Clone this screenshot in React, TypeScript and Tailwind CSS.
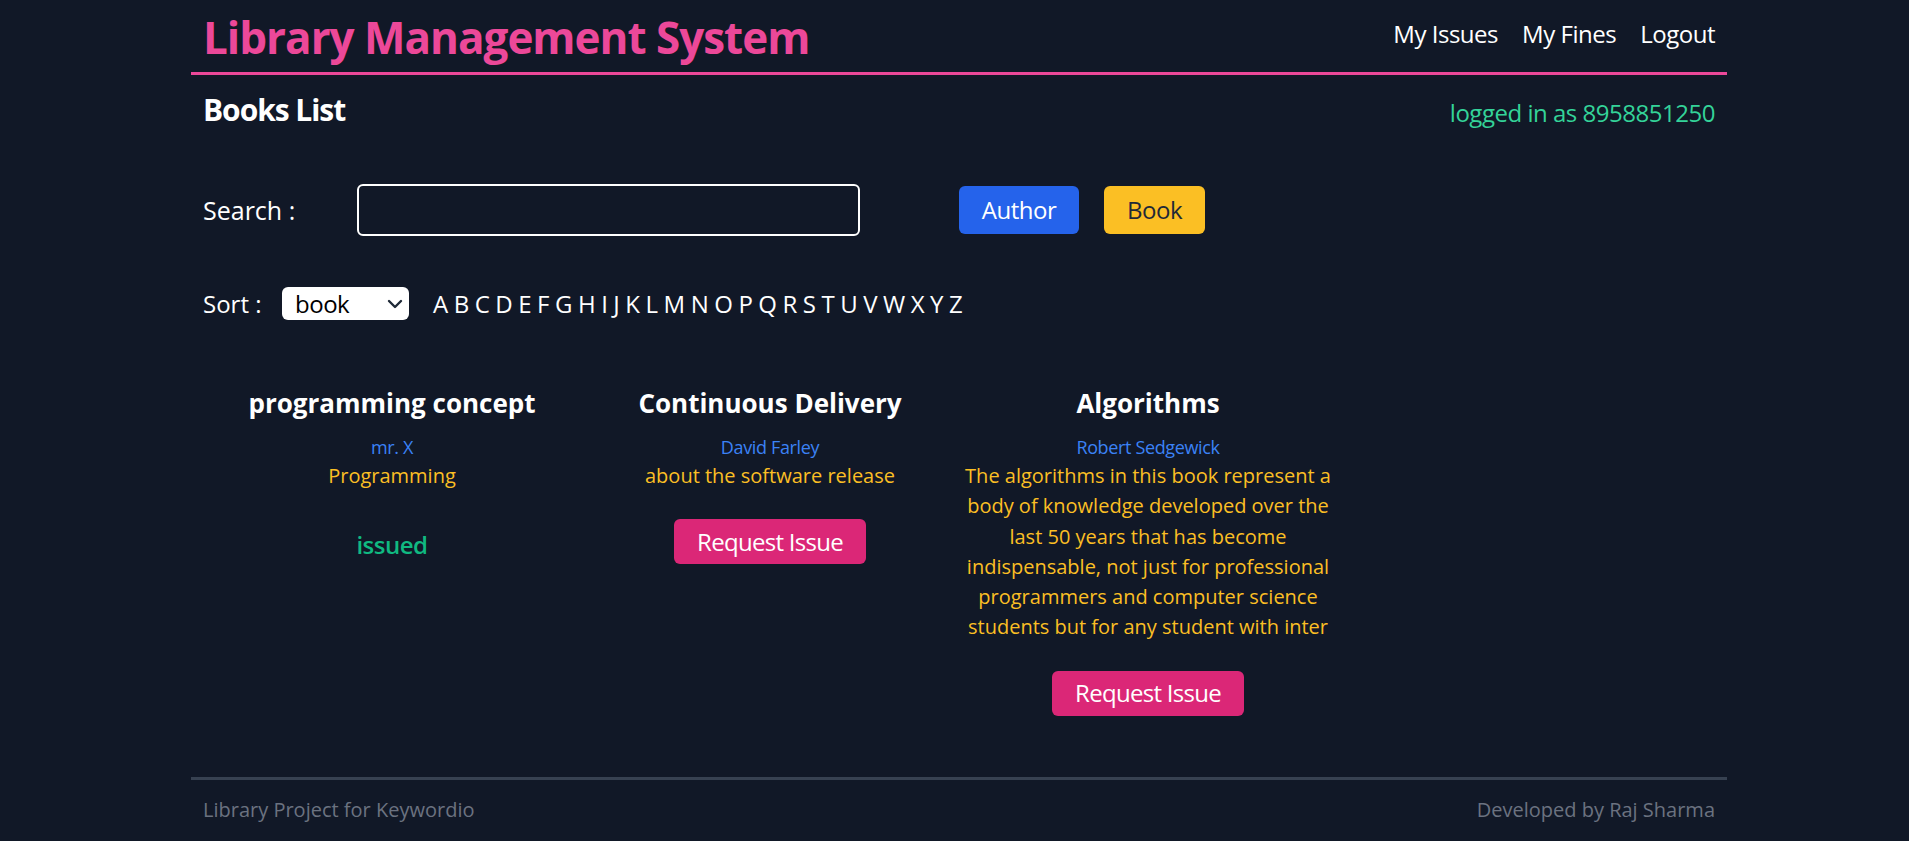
import React from "react";

const books = [
  {
    title: "programming concept",
    author: "mr. X",
    desc: ["Programming"],
    issued: true,
  },
  {
    title: "Continuous Delivery",
    author: "David Farley",
    desc: ["about the software release"],
    issued: false,
  },
  {
    title: "Algorithms",
    author: "Robert Sedgewick",
    desc: [
      "The algorithms in this book represent a",
      "body of knowledge developed over the",
      "last 50 years that has become",
      "indispensable, not just for professional",
      "programmers and computer science",
      "students but for any student with inter",
    ],
    issued: false,
  },
];

const letters = "ABCDEFGHIJKLMNOPQRSTUVWXYZ".split("");

export default function App() {
  return (
    <div className="min-h-screen bg-[#111827] pl-[9px] font-['Open_Sans','Noto_Sans',sans-serif] text-white">
      <div className="mx-auto w-[1536px]">
        <header className="flex h-[75px] items-center justify-between border-b-[3px] border-[#ec4899] px-3 pb-[4px]">
          <h1 className="pt-[5px] text-[44px] leading-[48px] font-bold tracking-[-0.023em] text-[#ec4899]">Library Management System</h1>
          <nav className="flex gap-6 text-2xl tracking-[-0.02em]">
            <a>My Issues</a>
            <a>My Fines</a>
            <a>Logout</a>
          </nav>
        </header>

        <div className="flex items-start justify-between px-3 pt-[17px]">
          <h2 className="text-3xl font-bold tracking-[-0.035em]">Books List</h2>
          <p className="mt-[5px] text-2xl tracking-[-0.02em] text-[#34d399]">logged in as 8958851250</p>
        </div>

        <div className="mt-[55px] flex items-center px-3">
          <label className="w-[154px] text-[25px] leading-8">Search :</label>
          <input className="h-[52px] w-[503px] rounded-md border-2 border-white bg-transparent px-3 text-2xl text-white outline-none" />
          <button className="ml-[99px] h-[48px] w-[120px] rounded-md bg-[#2563eb] text-2xl tracking-[-0.02em]">Author</button>
          <button className="ml-[25px] h-[48px] w-[101px] rounded-md bg-[#fbbf24] text-2xl tracking-[-0.02em] text-[#1f2937]">Book</button>
        </div>

        <div className="mt-[51px] flex items-center px-3">
          <span className="w-[79px] text-2xl">Sort :</span>
          <div className="flex h-[33px] w-[127px] items-center justify-between rounded-md bg-white pl-[13px] pr-[6px] text-2xl text-black">
            <span className="tracking-[-0.02em]">book</span>
            <svg width="16" height="10" viewBox="0 0 16 10" fill="none">
              <path d="M2 2 L8 8 L14 2" stroke="#1f2937" strokeWidth="2.4" strokeLinecap="round" strokeLinejoin="round" />
            </svg>
          </div>
          <div className="ml-[24px] flex gap-[5.5px] text-2xl">
            {letters.map((l) => (
              <span key={l}>{l}</span>
            ))}
          </div>
        </div>

        <div className="mt-[67px] grid grid-cols-4 px-3">
          {books.map((b) => (
            <div key={b.title} className="flex flex-col items-center text-center">
              <h3 className="text-[26px] leading-8 font-bold">{b.title}</h3>
              <p className="mt-[14px] text-lg tracking-[-0.02em] text-[#3b82f6]">{b.author}</p>
              <p className="text-xl leading-[30.3px] text-[#fbbf24]">
                {b.desc.map((line, i) => (
                  <React.Fragment key={i}>
                    {line}
                    {i < b.desc.length - 1 && <br />}
                  </React.Fragment>
                ))}
              </p>
              {b.issued ? (
                <p className="mt-[38px] text-2xl font-semibold tracking-[-0.02em] text-[#10b981]">issued</p>
              ) : (
                <button className="mt-7 h-[45px] w-[192px] rounded-md bg-[#db2777] text-2xl tracking-[-0.03em]">Request Issue</button>
              )}
            </div>
          ))}
        </div>

        <footer className="mt-[61px] flex justify-between border-t-[3px] border-[#374151] px-3 pt-[16px] text-xl text-[#6b7280]">
          <span>Library Project for Keywordio</span>
          <span>Developed by Raj Sharma</span>
        </footer>
      </div>
    </div>
  );
}
